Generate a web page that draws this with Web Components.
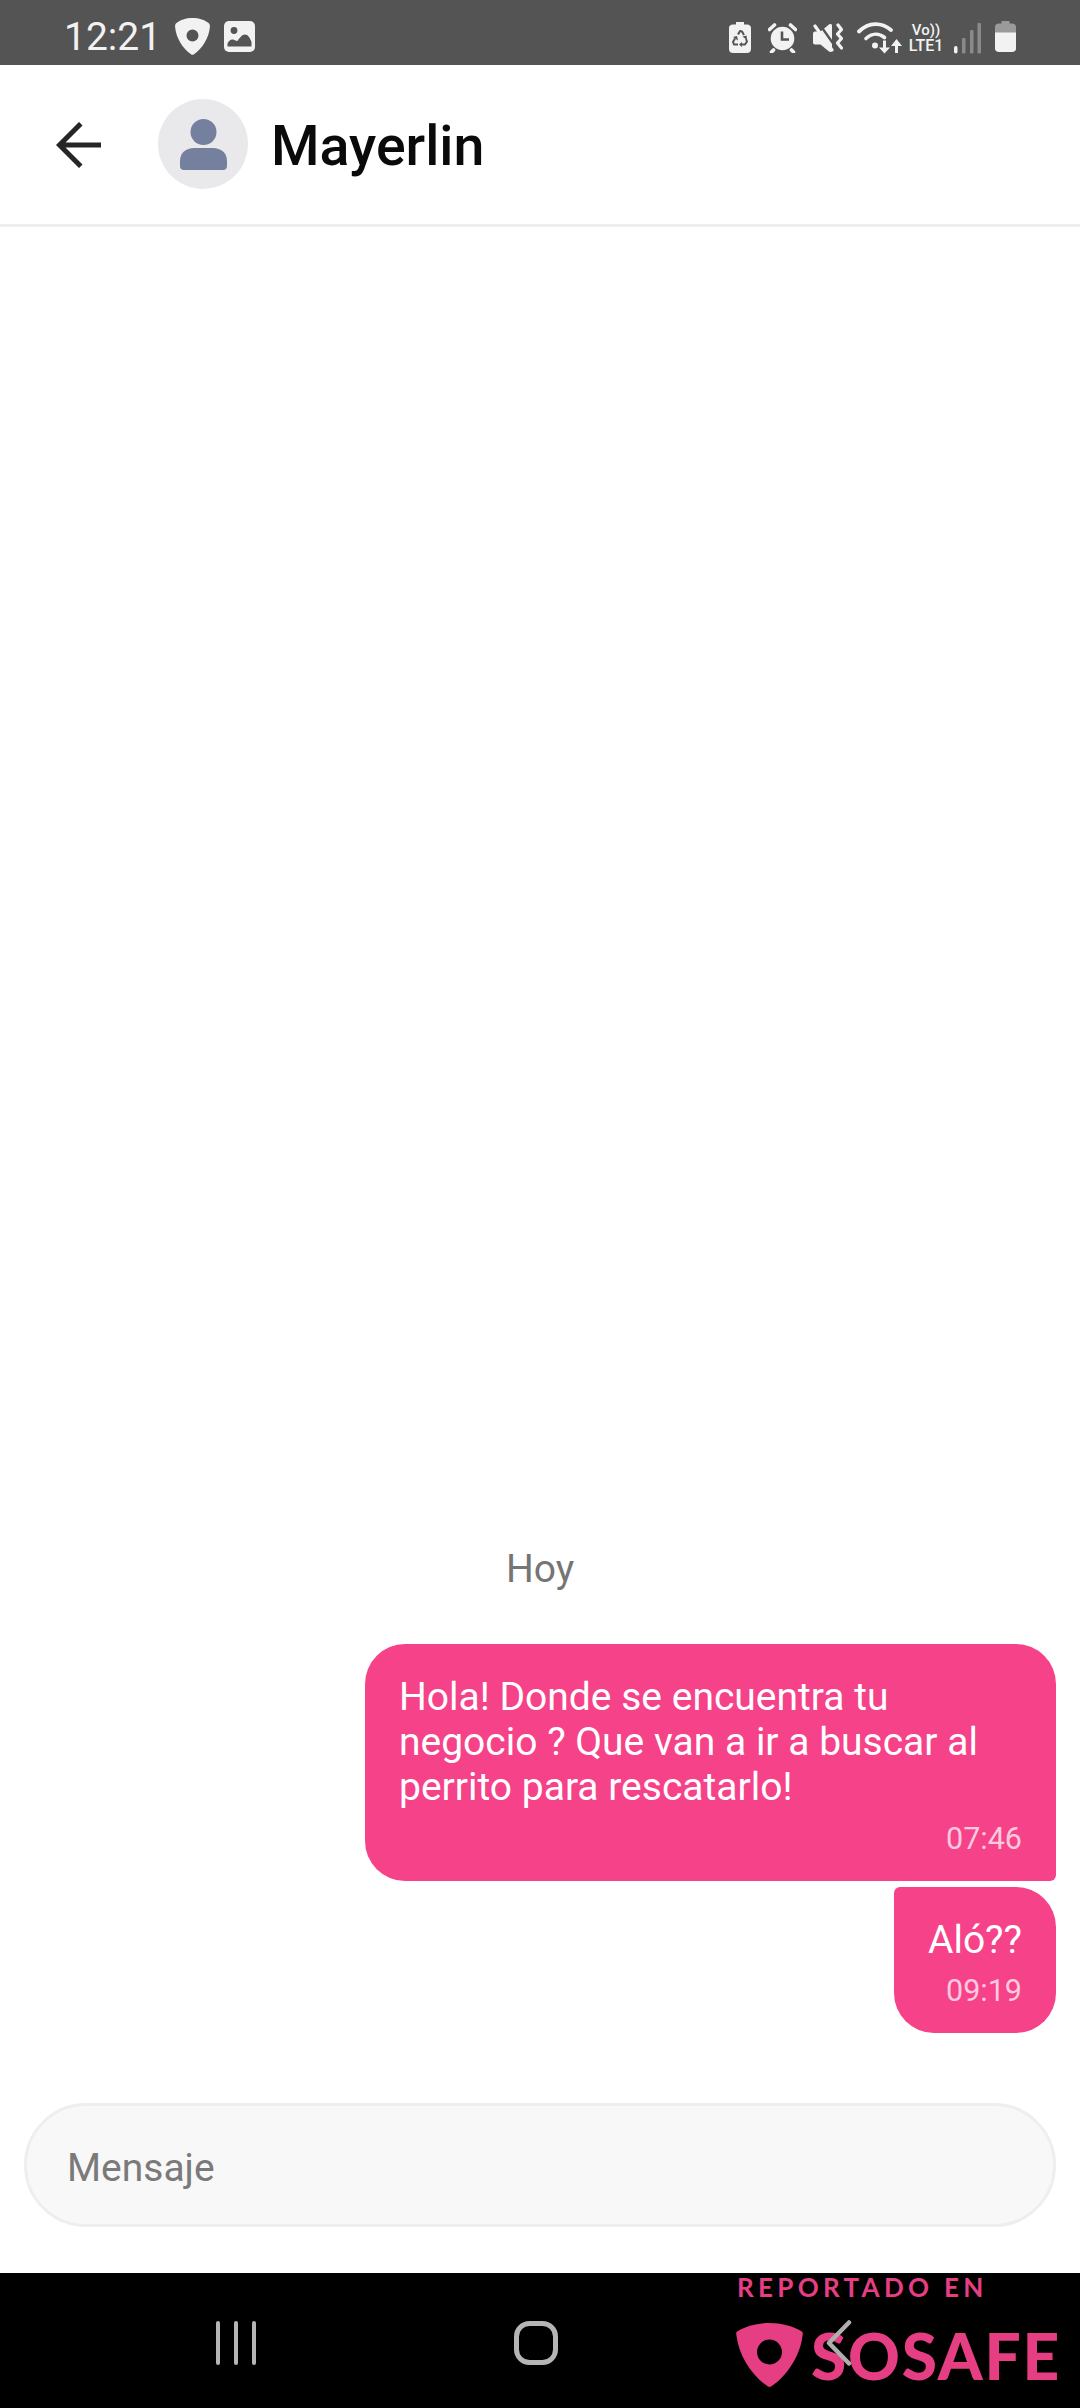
<!DOCTYPE html>
<html lang="es">
<head>
<meta charset="utf-8">
<title>Mayerlin</title>
<style>
  html, body { margin: 0; height: 100%; }
  body { font-family: Roboto, "Liberation Sans", sans-serif; background: #fff; }
  chat-app { height: 2408px; }
</style>
</head>
<body>
<chat-app>
  <status-bar slot="status" time="12:21"></status-bar>
  <chat-header slot="header" name="Mayerlin"></chat-header>
  <date-divider>Hoy</date-divider>
  <chat-bubble time="07:46" tail="bottom">Hola! Donde se encuentra tu negocio ? Que van a ir a buscar al perrito para rescatarlo!</chat-bubble>
  <chat-bubble time="09:19" tail="top">Aló??</chat-bubble>
  <message-input slot="input" placeholder="Mensaje"></message-input>
  <nav-bar slot="nav"><sosafe-badge></sosafe-badge></nav-bar>
</chat-app>

<script>
class ChatApp extends HTMLElement {
  constructor() {
    super();
    this.attachShadow({ mode: 'open' }).innerHTML = `
      <style>
        :host { display: flex; flex-direction: column; width: 1080px; background: #fff; overflow: hidden; }
        .thread {
          flex: 1;
          display: flex;
          flex-direction: column;
          justify-content: flex-end;
          align-items: flex-end;
          gap: 6px;
          padding: 0 24px 70px;
        }
      </style>
      <slot name="status"></slot>
      <slot name="header"></slot>
      <div class="thread"><slot></slot></div>
      <slot name="input"></slot>
      <slot name="nav"></slot>
    `;
  }
}

class StatusBar extends HTMLElement {
  connectedCallback() {
    const time = this.getAttribute('time');
    this.attachShadow({ mode: 'open' }).innerHTML = `
      <style>
        :host { display: flex; align-items: flex-start; height: 65px; background: #545454; color: #f2f2f2; padding: 21px 64px 0 64px; box-sizing: border-box; }
        svg { display: block; flex: none; }
        .time { font-size: 39px; line-height: 44px; margin: -6px 17px 0 0; width: 94px; white-space: nowrap; font-weight: 400; }
        .shield { margin: -3px 14px 0 0; }
        .left, .right { display: flex; align-items: flex-start; }
        .right { margin-left: auto; }
        .volte { width: 38px; flex: none; margin: 1px 9px 0 5px; display: flex; flex-direction: column; align-items: center; font-weight: 500; }
        .volte span { display: block; white-space: nowrap; }
        .vo { font-size: 15px; line-height: 16px; }
        .lte { font-size: 16px; line-height: 15px; }
      </style>
      <div class="left">
        <span class="time">${time}</span>
        <svg class="shield" width="35" height="37" viewBox="0 0 35 37">
          <path fill="#f2f2f2" fill-rule="evenodd" d="M17.5 0C24 0 30 2 33.5 5C34.8 6 35 7 34.9 9C34 20 27 31 19 36.3C18 37 17 37 16 36.3C8 31 1 20 .1 9C0 7 .2 6 1.5 5C5 2 11 0 17.5 0ZM17.5 11.5a6 6 0 1 0 0 12a6 6 0 1 0 0-12Z"/>
        </svg>
        <svg width="31" height="31" viewBox="0 0 31 31">
          <rect width="31" height="31" rx="5" fill="#f2f2f2"/>
          <circle cx="10" cy="9.5" r="3.4" fill="#545454"/>
          <path fill="#545454" d="M3.5 25.5V22.5C5 19.5 7 18 9 18.5C11 19 12 20 13.5 20C15.5 17 18 13.5 21 13.5C24 13.5 26 17 27.5 21V25.5Z"/>
        </svg>
      </div>
      <div class="right">
        <svg style="margin:1px 17px 0 0" width="22" height="31" viewBox="0 0 22 31">
          <path fill="#f2f2f2" d="M7 0H15V2.5H18C20.5 2.5 22 4 22 6V27C22 29.5 20.5 31 18 31H4C1.5 31 0 29.5 0 27V6C0 4 1.5 2.5 4 2.5H7Z"/>
          <path fill="none" stroke="#545454" stroke-width="2" stroke-linejoin="round" d="M9 12.5L11 9L13 9.5L15 13M17 17L18 19.5L16 22.5H13M9 22.5H5L4 20L6 16.5"/>
          <path fill="#545454" d="M13 20L13 25L10 22.5ZM13.500 14.500L17.500 13.500L18 18ZM4 15L8 14L9 18.500Z"/>
        </svg>
        <svg style="margin:2px 16px 0 0" width="29" height="30" viewBox="0 0 29 30">
          <circle cx="14.500" cy="15.500" r="11.800" fill="#f2f2f2"/>
          <path fill="none" stroke="#545454" stroke-width="2.600" d="M14 8.500V16.500H21"/>
          <path fill="none" stroke="#f2f2f2" stroke-width="3.600" stroke-linecap="round" d="M1.500 6.500L6.500 2M22.500 2L27.500 6.500M5.500 27L3.500 29M23.500 27L25.500 29"/>
        </svg>
        <svg style="margin:2px 14px 0 0" width="30" height="30" viewBox="0 0 30 30">
          <path fill="#f2f2f2" d="M0 10.500C0 9.500 .8 8.500 2 8.500H7.500L16 1.500C17.500 .5 19 1 19 3V27C19 29 17.500 29.500 16 28.500L7.500 21.500H2C.8 21.500 0 20.500 0 19.500Z"/>
          <path fill="none" stroke="#545454" stroke-width="2.400" d="M5 -1L24 26"/>
          <path fill="none" stroke="#f2f2f2" stroke-width="3.200" stroke-linecap="round" d="M2 3L19 27"/>
          <path fill="none" stroke="#f2f2f2" stroke-width="3.200" stroke-linecap="round" stroke-linejoin="round" d="M25 2L28.500 6.500L24.500 11L28.500 15.500L24.500 20L28.500 25"/>
        </svg>
        <svg width="45" height="33" viewBox="0 0 45 33">
          <g fill="none" stroke="#f2f2f2" stroke-linecap="round">
            <path stroke-width="3.800" d="M2 10.500C12 1 24 1 34 9"/>
            <path stroke-width="3.600" d="M9 17.500C15 12 22 12 27.500 16.500"/>
          </g>
          <circle cx="18" cy="24.500" r="3" fill="#f2f2f2"/>
          <path fill="#f2f2f2" d="M26 19.500H29V26.500H33L27.500 32.500L22 26.500H26ZM38 32V25H34L39.500 18L45 25H41V32Z"/>
        </svg>
        <div class="volte">
          <span class="vo">Vo))</span>
          <span class="lte">LTE1</span>
        </div>
        <svg style="margin:2px 14px 0 0" width="27" height="31" viewBox="0 0 27 31">
          <rect x="0" y="23" width="3.500" height="7.500" rx="1.700" fill="#f2f2f2"/>
          <rect x="8" y="15" width="3.500" height="15.500" rx="1" fill="#8a8a8a"/>
          <rect x="16" y="7" width="3.500" height="23.500" rx="1" fill="#8a8a8a"/>
          <rect x="23.500" y="0" width="3.500" height="30.500" rx="1" fill="#8a8a8a"/>
        </svg>
        <svg width="21" height="31" viewBox="0 0 21 31">
          <path fill="#9a9a9a" d="M6.500 0H14.500V2.500H17C19.500 2.500 21 4 21 6V12H0V6C0 4 1.500 2.500 4 2.500H6.500Z"/>
          <path fill="#f2f2f2" d="M0 11.500H21V27.500C21 29.500 19.500 31 17 31H4C1.500 31 0 29.500 0 27.500Z"/>
        </svg>
      </div>
    `;
  }
}

class ChatHeader extends HTMLElement {
  connectedCallback() {
    const name = this.getAttribute('name');
    this.attachShadow({ mode: 'open' }).innerHTML = `
      <style>
        :host { display: flex; align-items: center; height: 162px; box-sizing: border-box; border-bottom: 3px solid #eeeeee; background: #fff; padding-left: 56px; }
        svg { display: block; flex: none; }
        .avatar { width: 90px; height: 90px; border-radius: 50%; background: #e9e9eb; margin: -1px 23px 0 57px; display: flex; align-items: center; justify-content: center; flex: none; }
        .name { font-size: 55.5px; font-weight: 500; line-height: 66px; color: #0a0a0a; margin-top: 4px; }
      </style>
      <svg width="45" height="46" viewBox="0 0 45 46">
        <path fill="none" stroke="#262626" stroke-width="5" stroke-linecap="square" d="M23 3.500L3.500 23L23 42.500M5 23H43"/>
      </svg>
      <div class="avatar">
        <svg width="47" height="51" viewBox="0 0 47 51">
          <circle cx="23.500" cy="13" r="13" fill="#757f9e"/>
          <path fill="#757f9e" d="M14 29H33C41 29 47 34 47 42V47C47 49.500 45.500 51 43 51H4C1.500 51 0 49.500 0 47V42C0 34 6 29 14 29Z"/>
        </svg>
      </div>
      <span class="name">${name}</span>
    `;
  }
}

class DateDivider extends HTMLElement {
  constructor() {
    super();
    this.attachShadow({ mode: 'open' }).innerHTML = `
      <style>
        :host { display: block; align-self: stretch; margin: 0 -24px 46px; text-align: center; font-size: 39px; line-height: 45px; color: #757575; }
      </style>
      <slot></slot>
    `;
  }
}

class ChatBubble extends HTMLElement {
  connectedCallback() {
    const tail = this.getAttribute('tail');
    const radius = tail === 'top' ? '6px 40px 40px 40px' : '40px 40px 6px 40px';
    this.attachShadow({ mode: 'open' }).innerHTML = `
      <style>
        :host { display: flex; flex-direction: column; max-width: 691px; box-sizing: border-box; padding: 31px 34px 24px; background: #f54289; color: #fff; border-radius: ${radius}; font-size: 39px; line-height: 45.33px; }
        .time { align-self: flex-end; font-size: 30.5px; line-height: 36px; margin-top: 10px; color: rgba(255,255,255,.72); }
      </style>
      <div><slot></slot></div>
      <span class="time">${this.getAttribute('time')}</span>
    `;
  }
}

class MessageInput extends HTMLElement {
  connectedCallback() {
    this.attachShadow({ mode: 'open' }).innerHTML = `
      <style>
        :host { display: flex; align-items: center; height: 124px; margin: 0 24px 46px; box-sizing: border-box; padding: 5px 0 0 40px; background: #f8f8f8; border: 3px solid #eeeeee; border-radius: 62px; font-size: 39px; color: #7a7a7a; }
      </style>
      <span>${this.getAttribute('placeholder')}</span>
    `;
  }
}

class NavBar extends HTMLElement {
  constructor() {
    super();
    this.attachShadow({ mode: 'open' }).innerHTML = `
      <style>
        :host { display: flex; align-items: center; position: relative; height: 135px; background: #000; padding: 0 0 0 215px; box-sizing: border-box; }
        svg { display: block; flex: none; position: relative; z-index: 1; margin-top: 5px; }
      </style>
      <svg style="margin-right:257px" width="42" height="44" viewBox="0 0 42 44">
        <path stroke="#b5b5b5" stroke-width="4" stroke-linecap="round" d="M3 2V42M21 2V42M39 2V42"/>
      </svg>
      <svg style="margin-right:268px" width="44" height="44" viewBox="0 0 44 44">
        <rect x="2.500" y="2.500" width="39" height="39" rx="13" fill="none" stroke="#b5b5b5" stroke-width="5"/>
      </svg>
      <svg width="26" height="46" viewBox="0 0 26 46">
        <path fill="none" stroke="#aeaeae" stroke-width="4.500" stroke-linecap="round" stroke-linejoin="round" d="M23 2.500L3 23L23 43.500"/>
      </svg>
      <slot></slot>
    `;
  }
}

class SosafeBadge extends HTMLElement {
  constructor() {
    super();
    this.attachShadow({ mode: 'open' }).innerHTML = `
      <style>
        :host { position: absolute; left: 736px; top: 0; width: 344px; height: 135px; color: #e63e83; font-family: Lato, "Liberation Sans", sans-serif; font-weight: 900; }
        .label { position: absolute; left: 1px; top: -1px; font-size: 26px; line-height: 30px; letter-spacing: 4.3px; white-space: nowrap; font-weight: 700; }
        .row { position: absolute; left: 0; top: 50px; display: flex; align-items: flex-start; }
        svg { display: block; flex: none; margin-right: 8px; }
        .brand { font-size: 64px; line-height: 66px; letter-spacing: 1.8px; white-space: nowrap; }
      </style>
      <div class="label">REPORTADO EN</div>
      <div class="row">
        <svg width="67" height="64" viewBox="0 0 67 64">
          <path fill="#e63e83" fill-rule="evenodd" d="M33.500 0C45 0 57 3 65 8C67 9 67 10 66.500 13C64 33 51 53 35 63.500C34 64 33 64 32 63.500C16 53 3 33 .5 13C0 10 0 9 2 8C10 3 22 0 33.500 0ZM33.500 16.500a12.500 12.500 0 1 0 0 25a12.500 12.500 0 1 0 0-25Z"/>
        </svg>
        <span class="brand">SOSAFE</span>
      </div>
    `;
  }
}

customElements.define('chat-app', ChatApp);
customElements.define('status-bar', StatusBar);
customElements.define('chat-header', ChatHeader);
customElements.define('date-divider', DateDivider);
customElements.define('chat-bubble', ChatBubble);
customElements.define('message-input', MessageInput);
customElements.define('nav-bar', NavBar);
customElements.define('sosafe-badge', SosafeBadge);
</script>
</body>
</html>
